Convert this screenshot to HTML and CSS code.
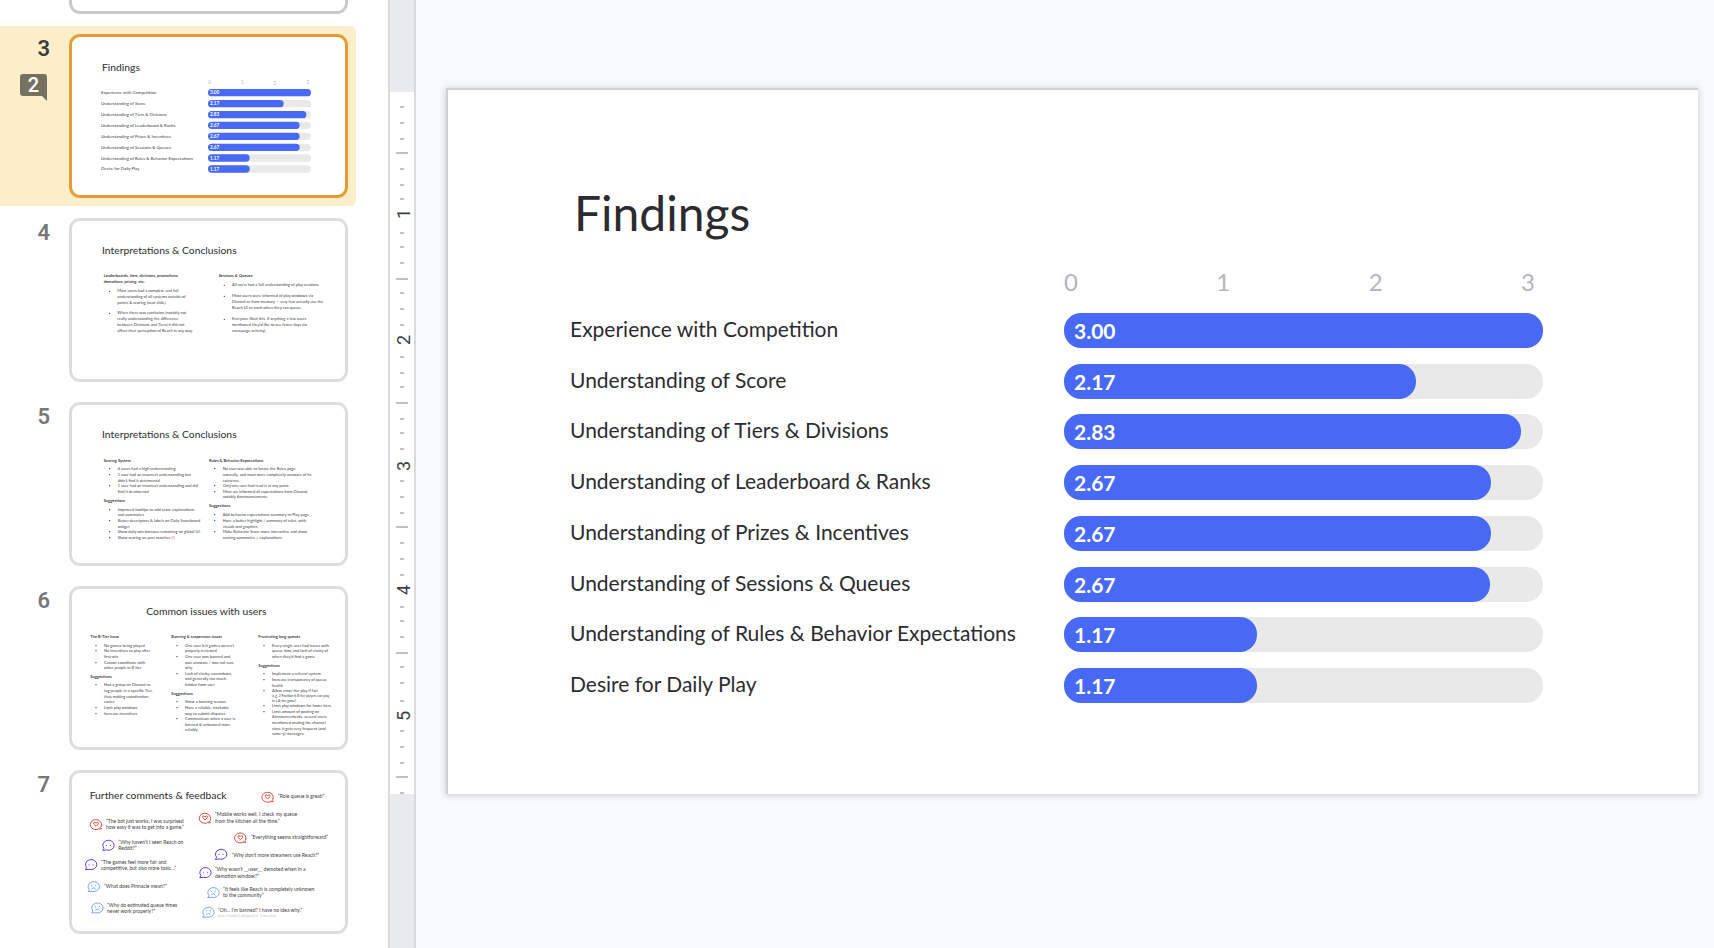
FILE: index.html
```html
<!DOCTYPE html>
<html lang="en">
<head>
<meta charset="utf-8">
<title>Findings</title>
<link rel="stylesheet" href="styles.css">
</head>
<body>
<svg class="defs" aria-hidden="true">
  <defs>
    <g id="chat-love"><path class="outline" d="M11 13A17 15 0 1 1 16 6M17 4Q17 9 13 11L17 15H9"/><path class="outline" d="M0 7L-7 0Q-8-6-4-5L0-3L4-5Q8-6 7 0Z"/></g>
    <g id="chat-dots"><path class="outline" d="M-13 9A17 15 0 1 1-5 14L-17 15L-13 9"/><path class="outline" d="M-6-1v3M6-1v3"/></g>
    <g id="chat-sad"><path class="outline" d="M-13 9A17 15 0 1 1-5 14L-17 15L-13 9"/><path class="outline" d="M-8-6l4 3M8-6l-4 3M-6 7q6-8 12 0M-6 0v1M6 0v1"/></g>
  </defs>
</svg>
<div class="app">
  <nav class="filmstrip" aria-label="Slides">
    <ol class="slides">
      <li class="item"><span class="num"></span><a class="thumb thumb-plain" href="#s2" aria-label="Slide 2"></a></li>
      <li class="item item-current">
        <span class="num">3<span class="badge">2</span></span>
        <a class="thumb" href="#s3" aria-label="Slide 3">
          <svg class="mini" viewBox="216 111 819 474">
            <text class="title" x="306" y="214">Findings</text>
            <g class="axis"><text x="624" y="252">0</text><text x="723" y="252">1</text><text x="820" y="255">2</text><text x="919" y="252">3</text></g>
            <g class="track"><rect x="624" y="267" width="309" height="22" rx="11"/><rect x="624" y="300" width="309" height="22" rx="11"/><rect x="624" y="333" width="309" height="22" rx="11"/><rect x="624" y="365" width="309" height="22" rx="11"/><rect x="624" y="398" width="309" height="22" rx="11"/><rect x="624" y="431" width="309" height="22" rx="11"/><rect x="624" y="463" width="309" height="22" rx="11"/><rect x="624" y="496" width="309" height="22" rx="11"/></g>
            <g class="bar"><rect x="624" y="267" width="309" height="22" rx="11"/><rect x="624" y="300" width="227" height="22" rx="11"/><rect x="624" y="333" width="295" height="22" rx="11"/><rect x="624" y="365" width="275" height="22" rx="11"/><rect x="624" y="398" width="275" height="22" rx="11"/><rect x="624" y="431" width="275" height="22" rx="11"/><rect x="624" y="463" width="125" height="22" rx="11"/><rect x="624" y="496" width="125" height="22" rx="11"/></g>
            <g class="label"><text x="303" y="282">Experience with Competition</text><text x="303" y="315">Understanding of Score</text><text x="303" y="348">Understanding of Tiers &amp; Divisions</text><text x="303" y="381">Understanding of Leaderboard &amp; Ranks</text><text x="303" y="414">Understanding of Prizes &amp; Incentives</text><text x="303" y="447">Understanding of Sessions &amp; Queues</text><text x="303" y="479">Understanding of Rules &amp; Behavior Expectations</text><text x="303" y="510">Desire for Daily Play</text></g>
            <g class="score"><text x="630" y="282">3.00</text><text x="630" y="315">2.17</text><text x="630" y="348">2.83</text><text x="630" y="381">2.67</text><text x="630" y="414">2.67</text><text x="630" y="447">2.67</text><text x="630" y="479">1.17</text><text x="630" y="512">1.17</text></g>
          </svg>
        </a>
      </li>
      <li class="item">
        <span class="num">4</span>
        <a class="thumb" href="#s4" aria-label="Slide 4">
          <svg class="mini" viewBox="216 34 819 474">
            <text class="title" x="306" y="132">Interpretations &amp; Conclusions</text>
            <g class="head"><text x="311" y="203">Leaderboards, tiers, divisions, promotions,</text><text x="311" y="220">demotions, prizing, etc.</text><text x="656" y="203">Sessions &amp; Queues</text></g>
            <g class="dot"><circle cx="329" cy="245" r="2"/><circle cx="329" cy="311" r="2"/><circle cx="673" cy="227" r="2"/><circle cx="673" cy="260" r="2"/><circle cx="673" cy="329" r="2"/></g>
            <g class="copy"><text x="352" y="248">Most users had a complete and full</text><text x="352" y="266">understanding of all systems outside of</text><text x="352" y="282">points &amp; scoring (next slide).</text><text x="352" y="314">When there was confusion (notably not</text><text x="352" y="332">really understanding the difference</text><text x="352" y="350">between Divisions and Tiers) it did not</text><text x="352" y="366">affect their perception of Reach in any way.</text><text x="696" y="230">All users had a full understanding of play sessions.</text><text x="696" y="263">Most users were informed of play windows via</text><text x="696" y="281">Discord or from memory — very few actually use the</text><text x="696" y="297">Reach UI to track when they can queue.</text><text x="696" y="332">Everyone liked this, if anything a few users</text><text x="696" y="348">mentioned they’d like to see fewer days (to</text><text x="696" y="366">encourage activity).</text></g>
          </svg>
        </a>
      </li>
      <li class="item">
        <span class="num">5</span>
        <a class="thumb" href="#s5" aria-label="Slide 5">
          <svg class="mini" viewBox="36 30 819 474">
            <text class="title" x="126" y="129">Interpretations &amp; Conclusions</text>
            <g class="head"><text x="131" y="200">Scoring System</text><text x="131" y="320">Suggestions</text><text x="447" y="200">Rules &amp; Behavior Expectations</text><text x="447" y="335">Suggestions</text></g>
            <g class="dot"><circle cx="149" cy="221" r="2"/><circle cx="149" cy="239" r="2"/><circle cx="149" cy="272" r="2"/><circle cx="149" cy="344" r="2"/><circle cx="149" cy="377" r="2"/><circle cx="149" cy="410" r="2"/><circle cx="149" cy="428" r="2"/><circle cx="464" cy="221" r="2"/><circle cx="464" cy="272" r="2"/><circle cx="464" cy="290" r="2"/><circle cx="464" cy="359" r="2"/><circle cx="464" cy="377" r="2"/><circle cx="464" cy="410" r="2"/></g>
            <g class="copy"><text x="173" y="224">4 users had a high understanding</text><text x="173" y="242">1 user had an incorrect understanding but</text><text x="173" y="260">didn’t find it detrimental</text><text x="173" y="275">1 user had an incorrect understanding and did</text><text x="173" y="293">find it detrimental</text><text x="173" y="347">Improved tooltips to add score explanations</text><text x="173" y="362">and summaries</text><text x="173" y="380">Better descriptors &amp; labels on Daily Scoreboard</text><text x="173" y="398">widget</text><text x="173" y="413">Show daily win bonuses remaining on global UI.</text><text x="173" y="431">Show scoring on past matches <tspan class="alert">(!)</tspan></text><text x="488" y="224">No user was able to locate the Rules page</text><text x="488" y="242">naturally, and most were completely unaware of its</text><text x="488" y="260">existence.</text><text x="488" y="275">Only one user had read it at any point.</text><text x="488" y="293">Most are informed of expectations from Discord,</text><text x="488" y="308">notably #announcements.</text><text x="488" y="362">Add behavior expectations summary to Play page</text><text x="488" y="380">Have a better highlight / summary of rules, with</text><text x="488" y="398">visuals and graphics</text><text x="488" y="413">Make Behavior Score more interactive and show</text><text x="488" y="431">scoring summaries + explanations.</text></g>
          </svg>
        </a>
      </li>
      <li class="item">
        <span class="num">6</span>
        <a class="thumb" href="#s6" aria-label="Slide 6">
          <svg class="mini" viewBox="36 27 819 474">
            <text class="title" x="259" y="105">Common issues with users</text>
            <g class="head"><text x="91" y="173">The B-Tier Issue</text><text x="91" y="293">Suggestions</text><text x="334" y="173">Banning &amp; suspension issues</text><text x="334" y="344">Suggestions</text><text x="595" y="173">Frustrating long queues</text><text x="595" y="260">Suggestions</text></g>
            <g class="dot"><circle cx="108" cy="197" r="2"/><circle cx="108" cy="212" r="2"/><circle cx="108" cy="248" r="2"/><circle cx="108" cy="314" r="2"/><circle cx="108" cy="383" r="2"/><circle cx="108" cy="401" r="2"/><circle cx="351" cy="197" r="2"/><circle cx="351" cy="230" r="2"/><circle cx="351" cy="281" r="2"/><circle cx="351" cy="365" r="2"/><circle cx="351" cy="383" r="2"/><circle cx="351" cy="416" r="2"/><circle cx="612" cy="197" r="2"/><circle cx="612" cy="281" r="2"/><circle cx="612" cy="299" r="2"/><circle cx="612" cy="332" r="2"/><circle cx="612" cy="377" r="2"/><circle cx="612" cy="395" r="2"/></g>
            <g class="copy"><text x="132" y="200">No games being played</text><text x="132" y="215">No incentives to play after</text><text x="132" y="233">first win</text><text x="132" y="251">Cannot coordinate with</text><text x="132" y="266">other people in B tier</text><text x="132" y="317">Had a group on Discord to</text><text x="132" y="335">tag people in a specific Tier,</text><text x="132" y="353">thus making coordination</text><text x="132" y="368">easier.</text><text x="132" y="386">Limit play windows</text><text x="132" y="404">Increase incentives</text><text x="375" y="200">One user felt games weren’t</text><text x="375" y="215">properly reviewed</text><text x="375" y="233">One user was banned and</text><text x="375" y="251">was unaware / was not sure</text><text x="375" y="266">why</text><text x="375" y="284">Lack of clarity, countdown,</text><text x="375" y="299">and generally too much</text><text x="375" y="317">hidden from user</text><text x="375" y="368">Show a banning reason.</text><text x="375" y="386">Have a reliable, trackable</text><text x="375" y="404">way to submit disputes</text><text x="375" y="419">Communicate when a user is</text><text x="375" y="437">banned &amp; unbanned more</text><text x="375" y="452">reliably.</text><text x="636" y="200">Every single user had issues with</text><text x="636" y="215">queue time and lack of clarity of</text><text x="636" y="233">when they’d find a game.</text><text x="636" y="284">Implement a referral system</text><text x="636" y="302">Increase transparency of queue</text><text x="636" y="320">health</text><text x="636" y="335">Allow cross-tier play if fair</text><text class="fine" x="636" y="350">(e.g. 2 Position 6 B-tier players can play</text><text class="fine" x="636" y="365">in a A-tier game)</text><text x="636" y="380">Limit play windows for lower tiers</text><text x="636" y="398">Limit amount of posting on</text><text x="636" y="413">#announcements, several users</text><text x="636" y="431">mentioned muting the channel</text><text x="636" y="449">since it gets very frequent (and</text><text x="636" y="464">same-y) messages.</text></g>
          </svg>
        </a>
      </li>
      <li class="item">
        <span class="num">7</span>
        <a class="thumb" href="#s7" aria-label="Slide 7">
          <svg class="mini" viewBox="216 38 819 474">
            <text class="title" x="269" y="117">Further comments &amp; feedback</text>
            <g class="love"><use href="#chat-love" x="803" y="109"/><use href="#chat-love" x="288" y="191"/><use href="#chat-love" x="615" y="172"/><use href="#chat-love" x="721" y="231"/></g>
            <g class="doubt"><use href="#chat-dots" x="325" y="255"/><use href="#chat-dots" x="273" y="313"/><use href="#chat-dots" x="663" y="282"/><use href="#chat-dots" x="616" y="337"/></g>
            <g class="sad"><use href="#chat-sad" x="281" y="379"/><use href="#chat-sad" x="292" y="443"/><use href="#chat-sad" x="640" y="397"/><use href="#chat-sad" x="625" y="456"/></g>
            <g class="quote"><text x="834" y="113">“Role queue is great!”</text><text x="318" y="189">“The bot just works, I was surprised</text><text x="318" y="206">how easy it was to get into a game.”</text><text x="355" y="252">“Why haven’t I seen Reach on</text><text x="355" y="269">Reddit?”</text><text x="303" y="312">“The games feel more fair and</text><text x="303" y="329">competitive, but also more toxic...”</text><text x="312" y="383">“What does Pinnacle mean?”</text><text x="321" y="441">“Why do estimated queue times</text><text x="321" y="458">never work properly?”</text><text x="645" y="168">“Mobile works well, I check my queue</text><text x="645" y="188">from the kitchen all the time.”</text><text x="752" y="236">“Everything seems straightforward”</text><text x="695" y="290">“Why don’t more streamers use Reach?”</text><text x="645" y="332">“Why wasn’t __user__ demoted when in a</text><text x="645" y="353">demotion window?”</text><text x="669" y="392">“It feels like Reach is completely unknown</text><text x="669" y="410">to the community”</text><text x="654" y="455">“Oh... I’m banned? I have no idea why.”</text><text class="faint" x="654" y="470">(user hadn’t played in 3 weeks)</text></g>
          </svg>
        </a>
      </li>
    </ol>
  </nav>
  <div class="ruler">
    <svg class="scale" width="24" height="702" viewBox="0 0 24 702" role="img" aria-label="Vertical ruler in inches">
      <path class="tick" d="M10 15h4M10 31h4M10 47h4M6 61h12M10 77h4M10 93h4M10 107h4M10 141h4M10 155h4M10 171h4M6 187h12M10 201h4M10 217h4M10 233h4M10 265h4M10 281h4M10 295h4M6 311h12M10 327h4M10 341h4M10 357h4M10 389h4M10 405h4M10 421h4M6 435h12M10 451h4M10 467h4M10 483h4M10 515h4M10 529h4M10 545h4M6 561h12M10 575h4M10 591h4M10 609h4M10 639h4M10 655h4M10 671h4M6 685h12M10 701h4"/>
      <g class="inch"><text transform="translate(20 122) rotate(-90)">1</text><text transform="translate(20 248) rotate(-90)">2</text><text transform="translate(20 374) rotate(-90)">3</text><text transform="translate(20 498) rotate(-90)">4</text><text transform="translate(20 624) rotate(-90)">5</text></g>
    </svg>
  </div>
  <main class="stage">
    <article class="slide">
      <h1 class="heading">Findings</h1>
      <div class="ticks"><span>0</span><span>1</span><span>2</span><span>3</span></div>
      <ul class="chart">
        <li class="row"><span class="name">Experience with Competition</span><span class="rail"><span class="fill" style="width:100%">3.00</span></span></li>
        <li class="row"><span class="name">Understanding of Score</span><span class="rail"><span class="fill" style="width:73.5%">2.17</span></span></li>
        <li class="row"><span class="name">Understanding of Tiers &amp; Divisions</span><span class="rail"><span class="fill" style="width:95.4%">2.83</span></span></li>
        <li class="row"><span class="name">Understanding of Leaderboard &amp; Ranks</span><span class="rail"><span class="fill" style="width:89.1%">2.67</span></span></li>
        <li class="row"><span class="name">Understanding of Prizes &amp; Incentives</span><span class="rail"><span class="fill" style="width:89.1%">2.67</span></span></li>
        <li class="row"><span class="name">Understanding of Sessions &amp; Queues</span><span class="rail"><span class="fill" style="width:89%">2.67</span></span></li>
        <li class="row"><span class="name">Understanding of Rules &amp; Behavior Expectations</span><span class="rail"><span class="fill" style="width:40.2%">1.17</span></span></li>
        <li class="row"><span class="name">Desire for Daily Play</span><span class="rail"><span class="fill" style="width:40.3%">1.17</span></span></li>
      </ul>
    </article>
  </main>
</div>
</body>
</html>
```
FILE: styles.css
```css
* { box-sizing: border-box; }
body {
  margin: 0;
  background: #f8f9fb;
  color: #2b2b30;
  font-family: Lato, Carlito, "Open Sans", sans-serif;
}
.defs { position: absolute; width: 0; height: 0; }
.app { display: flex; height: 100vh; overflow: hidden; }

/* Filmstrip */
.filmstrip { flex: 0 0 388px; background: #fff; overflow: hidden; }
.slides {
  list-style: none;
  margin: -158px 0 0;
  padding: 0;
  display: flex;
  flex-direction: column;
  gap: 4px;
}
.item {
  display: flex;
  gap: 19px;
  width: 356px;
  height: 180px;
  padding: 8px 8px 8px 0;
}
.item-current { background: #fceec8; border-radius: 0 6px 6px 0; }
.num {
  flex: 0 0 50px;
  display: flex;
  flex-direction: column;
  align-items: flex-end;
  gap: 12px;
  padding-top: 2px;
  font: 600 22px/26px Roboto, sans-serif;
  color: #777;
}
.item-current .num { color: #3c3c3c; }
.badge {
  position: relative;
  width: 27px;
  height: 22px;
  margin-right: 3px;
  border-radius: 3px 3px 0 3px;
  background: #767060;
  color: #fff;
  font-size: 20px;
  font-weight: 500;
  line-height: 23px;
  text-align: center;
}
.badge::after {
  content: "";
  position: absolute;
  right: 0;
  top: 100%;
  border-top: 5px solid #767060;
  border-left: 5px solid transparent;
}
.thumb {
  flex: 1;
  display: block;
  border: 3px solid #dadce0;
  border-radius: 11px;
  background: #fff;
  overflow: hidden;
}
.thumb-plain { border-color: #cacaca; }
.item-current .thumb { border-color: #e69c36; }
.mini { display: block; width: 100%; height: 100%; fill: #3c3c40; }
.mini .title { font-size: 31px; fill: #2b2b30; }
.mini .axis { font-size: 15px; fill: #b5b4c0; }
.mini .label { font-size: 13px; }
.mini .score { font-size: 14px; font-weight: 700; fill: #fff; }
.mini .head { font-size: 12px; font-weight: 700; }
.mini .copy { font-size: 12px; }
.mini .fine { font-size: 10px; }
.mini .quote { font-size: 15px; }
.mini .faint { font-size: 13px; fill: #c4c4c8; }
.alert { fill: #e53935; }
.track { fill: #e9e9e9; }
.bar { fill: #4769f4; }
.outline { fill: none; stroke-width: 3; }
.love { stroke: #de5246; }
.doubt { stroke: #5b3fd6; }
.sad { stroke: #7aaaf0; }

/* Ruler */
.ruler {
  flex: 0 0 28px;
  border: solid #dadada;
  border-width: 0 2px;
  background: #e8eaed;
  padding-top: 92px;
}
.scale { display: block; background: #fff; }
.tick { fill: none; stroke: #bdc1c6; stroke-width: 2; }
.inch { font: 18px Roboto, sans-serif; fill: #3c4043; text-anchor: middle; }

/* Slide canvas */
.stage { flex: 1; min-width: 0; padding: 88px 16px 0 30px; }
.slide {
  border: solid #d0d0d0;
  border-width: 2px 0 0 2px;
  background: #fff;
  box-shadow: 0 1px 6px 1px rgba(60, 64, 67, 0.2);
  padding: 94px 155px 91px 122px;
}
.heading { margin: 0 0 0 4px; font-size: 48px; line-height: 58px; font-weight: 400; }
.ticks {
  display: flex;
  justify-content: space-between;
  width: 471px;
  margin: 25px 8px 0 auto;
  font-size: 24px;
  line-height: 30px;
  color: #b5b4c0;
}
.chart {
  list-style: none;
  margin: 16px 0 0;
  padding: 0;
  height: 390px;
  display: flex;
  flex-direction: column;
  justify-content: space-between;
}
.row { display: flex; align-items: flex-start; justify-content: space-between; }
.name { font-size: 21px; line-height: 32px; }
.rail { width: 479px; border-radius: 17px; background: #e9e9e9; }
.fill {
  display: block;
  border-radius: 17px;
  padding-left: 10px;
  background: #4769f4;
  color: #fff;
  font-size: 21px;
  line-height: 35px;
  font-weight: 700;
}
```
